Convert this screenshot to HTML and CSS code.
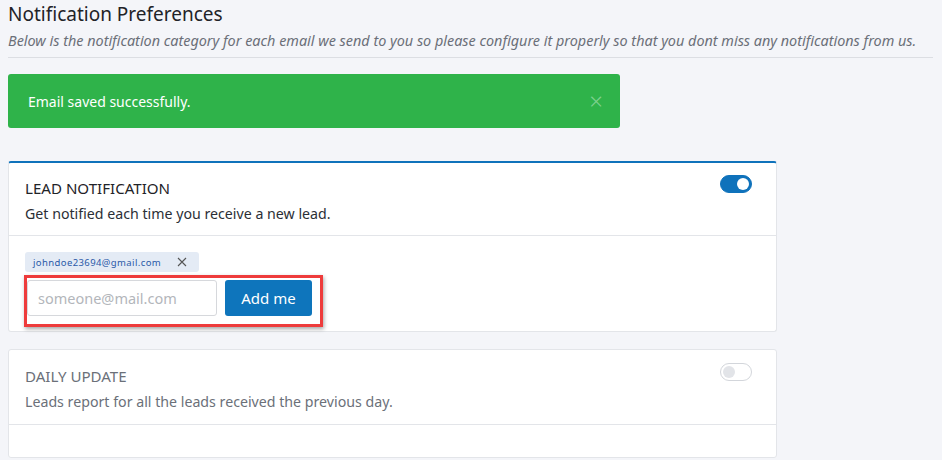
FILE: index.html
```html
<!DOCTYPE html>
<html>
<head>
  <title>Notification Preferences</title>
  <link rel="stylesheet" href="styles.css">
</head>
<body>
  <div class="page">
    <h3 class="page-title">Notification Preferences</h3>
    <p class="page-sub">Below is the notification category for each email we send to you so please configure it properly so that you dont miss any notifications from us.</p>
    <hr class="rule">

    <div class="alert">
      <span>Email saved successfully.</span>
      <span class="alert-close">&times;</span>
    </div>

    <div class="card active">
      <div class="card-head">
        <div>
          <h4 class="card-title">LEAD NOTIFICATION</h4>
          <p class="card-desc">Get notified each time you receive a new lead.</p>
        </div>
        <label class="switch on"><span class="knob"></span></label>
      </div>
      <div class="card-body">
        <div class="tag">johndoe23694@gmail.com
          <svg class="tag-x" width="10" height="10" viewBox="0 0 10 10"><path d="M1 1L9 9M9 1L1 9" stroke="#555" stroke-width="1.1" fill="none"/></svg>
        </div>
        <div class="add-row">
          <input type="text" class="email-input" placeholder="someone@mail.com">
          <button class="add-btn">Add me</button>
        </div>
      </div>
    </div>

    <div class="card disabled">
      <div class="card-head">
        <div>
          <h4 class="card-title">DAILY UPDATE</h4>
          <p class="card-desc">Leads report for all the leads received the previous day.</p>
        </div>
        <label class="switch"><span class="knob"></span></label>
      </div>
      <div class="card-body empty"></div>
    </div>
  </div>
</body>
</html>
```

FILE: styles.css
```css
body {
  margin: 0;
  background: #f4f5f9;
  font-family: "Noto Sans", "Open Sans", sans-serif;
  color: #212529;
}
.page {
  padding: 0 9px 0 8px;
}
.page-title {
  margin: 0;
  padding-top: 1px;
  font-size: 19px;
  font-weight: 400;
  line-height: 26px;
  color: #1f2328;
}
.page-sub {
  margin: 3px 0 0;
  font-size: 14.4px;
  font-style: italic;
  line-height: 22px;
  color: #6b6f78;
}
.rule {
  border: none;
  border-top: 1px solid #dcdee3;
  margin: 5px 0 0;
}
.alert {
  width: 612px;
  height: 54px;
  margin-top: 16px;
  box-sizing: border-box;
  padding: 0 17px 0 20px;
  background: #2fb34a;
  color: #fff;
  border-radius: 3px;
  font-size: 14px;
  display: flex;
  align-items: center;
  justify-content: space-between;
}
.alert-close {
  font-size: 24px;
  font-weight: 300;
  color: #7fd18f;
  line-height: 1;
}
.card {
  width: 769px;
  background: #fff;
  border: 1px solid #e3e5e9;
  border-radius: 3px;
  box-sizing: border-box;
}
.card.active {
  margin-top: 33px;
  border-top: 2px solid #0f72bb;
}
.card.disabled {
  margin-top: 17px;
}
.card-head {
  display: flex;
  justify-content: space-between;
  align-items: flex-start;
  padding: 12px 24px 9px 16px;
  border-bottom: 1px solid #e3e5e9;
}
.disabled .card-head {
  padding-top: 13px;
  padding-bottom: 10px;
}
.card-title {
  margin: 0;
  font-size: 15.1px;
  font-weight: 400;
  line-height: 26px;
  color: #1f2328;
}
.card-desc {
  margin: 0;
  font-size: 14.2px;
  line-height: 25px;
  color: #2b2f36;
}
.disabled .card-title,
.disabled .card-desc {
  color: #6b7079;
}
.switch {
  display: block;
  width: 32px;
  height: 18px;
  border-radius: 9px;
  box-sizing: border-box;
  border: 1px solid #d3d6db;
  background: #fff;
  position: relative;
}
.switch .knob {
  position: absolute;
  top: 2px;
  left: 2px;
  width: 12px;
  height: 12px;
  border-radius: 50%;
  background: #e2e4e8;
}
.switch.on {
  background: #0f72bb;
  border-color: #0f72bb;
}
.switch.on .knob {
  left: auto;
  right: 2px;
  background: #fff;
}
.card-body {
  padding: 16px 16px 4px;
}
.card-body.empty {
  height: 32px;
  padding: 0;
}
.tag {
  display: flex;
  width: max-content;
  align-items: center;
  height: 20px;
  padding: 0 12px 0 8px;
  background: #e4ebf5;
  border-radius: 3px;
  font-size: 9.5px;
  letter-spacing: 0.4px;
  color: #2a5aa8;
}
.tag-x {
  margin-left: 16px;
}
.add-row {
  display: flex;
  width: max-content;
  gap: 8px;
  margin-top: 3px;
  margin-left: -1px;
  padding: 2px 8px 8px 0;
  border: 3px solid #ee3b3b;
  box-shadow: 1px 2px 4px rgba(0,0,0,0.35);
}
.email-input {
  width: 190px;
  height: 36px;
  box-sizing: border-box;
  border: 1px solid #d6d8dc;
  border-radius: 3px;
  padding: 0 10px;
  font-family: inherit;
  font-size: 14.5px;
  color: #333;
}
.email-input::placeholder {
  color: #b3b6bb;
}
.add-btn {
  width: 87px;
  height: 36px;
  border: none;
  border-radius: 3px;
  background: #0e75bc;
  color: #fff;
  font-family: inherit;
  font-size: 15px;
  cursor: pointer;
}
```
